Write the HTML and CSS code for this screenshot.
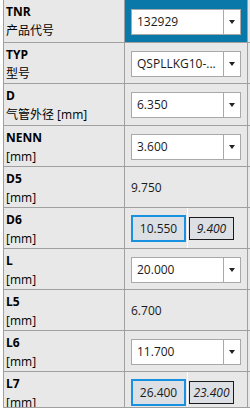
FILE: index.html
```html
<!DOCTYPE html>
<html lang="zh">
<head>
    <meta charset="UTF-8">
    <meta name="viewport" content="width=device-width, initial-scale=1.0">
    <title>Properties</title>
    <link rel="stylesheet" href="styles.css">
</head>
<body>
    <div class="grid">
        <div class="row row-first">
            <div class="label"><b>TNR</b><span>产品代号</span></div>
            <div class="value selected">
                <div class="combo"><span class="combo-text">132929</span><span class="combo-btn"></span></div>
            </div>
            <div class="filler"></div>
        </div>
        <div class="row">
            <div class="label"><b>TYP</b><span>型号</span></div>
            <div class="value">
                <div class="combo"><span class="combo-text">QSPLLKG10-...</span><span class="combo-btn"></span></div>
            </div>
            <div class="filler"></div>
        </div>
        <div class="row row-tall">
            <div class="label"><b>D</b><span>气管外径 [mm]</span></div>
            <div class="value">
                <div class="combo"><span class="combo-text">6.350</span><span class="combo-btn"></span></div>
            </div>
            <div class="filler"></div>
        </div>
        <div class="row">
            <div class="label"><b>NENN</b><span>[mm]</span></div>
            <div class="value">
                <div class="combo"><span class="combo-text">3.600</span><span class="combo-btn"></span></div>
            </div>
            <div class="filler"></div>
        </div>
        <div class="row">
            <div class="label"><b>D5</b><span>[mm]</span></div>
            <div class="value"><span class="plain">9.750</span></div>
            <div class="filler"></div>
        </div>
        <div class="row">
            <div class="label"><b>D6</b><span>[mm]</span></div>
            <div class="value">
                <div class="cell-edit">10.550</div>
                <div class="split"></div>
                <div class="cell-ref">9.400</div>
            </div>
            <div class="filler"></div>
        </div>
        <div class="row">
            <div class="label"><b>L</b><span>[mm]</span></div>
            <div class="value">
                <div class="combo"><span class="combo-text">20.000</span><span class="combo-btn"></span></div>
            </div>
            <div class="filler"></div>
        </div>
        <div class="row">
            <div class="label"><b>L5</b><span>[mm]</span></div>
            <div class="value"><span class="plain">6.700</span></div>
            <div class="filler"></div>
        </div>
        <div class="row">
            <div class="label"><b>L6</b><span>[mm]</span></div>
            <div class="value">
                <div class="combo"><span class="combo-text">11.700</span><span class="combo-btn"></span></div>
            </div>
            <div class="filler"></div>
        </div>
        <div class="row">
            <div class="label"><b>L7</b><span>[mm]</span></div>
            <div class="value">
                <div class="cell-edit">26.400</div>
                <div class="split"></div>
                <div class="cell-ref">23.400</div>
            </div>
            <div class="filler"></div>
        </div>
    </div>
</body>
</html>
```

FILE: styles.css
```css
:root {
    --grid-line: #a0a0a0;
    --cell-bg: #e8e8e8;
    --select-bg: #0a78a8;
    --focus: #1791e0;
    --box-bg: #dcdfe3;
    --text-color: #1a1a1a;
}

* {
    box-sizing: border-box;
}

body {
    margin: 0;
    background: #fff;
    font-family: "Open Sans", "Noto Sans CJK SC", sans-serif;
    font-size: 12px;
    color: var(--text-color);
}

.grid {
    box-sizing: content-box;
    margin-left: 3px;
    height: 407px;
    overflow: hidden;
    border-left: 1px solid var(--grid-line);
    border-bottom: 1px solid var(--grid-line);
    background: var(--cell-bg);
}

.row {
    display: grid;
    grid-template-columns: 121px 123px 1fr;
    height: 41px;
    border-bottom: 1px solid var(--grid-line);
}

.row-first {
    height: 43px;
}

.row-tall {
    height: 42px;
}

.label {
    display: flex;
    flex-direction: column;
    padding: 2px 2px 0;
    line-height: 19px;
    color: #000;
    border-right: 1px solid var(--grid-line);
    white-space: nowrap;
}

.label b {
    font-weight: 700;
}

.value {
    display: flex;
    align-items: center;
    padding-left: 6px;
    border-right: 1px solid var(--grid-line);
}

.selected {
    background: var(--select-bg);
}

.combo {
    display: flex;
    width: 110px;
    height: 26px;
    margin-top: 1px;
    background: #fff;
    border: 1px solid #a9a9a9;
}

.combo-text {
    flex: 1;
    padding: 0 5px;
    line-height: 24px;
    overflow: hidden;
    white-space: nowrap;
}

.combo-btn {
    display: flex;
    align-items: center;
    justify-content: center;
    width: 17px;
    border-left: 1px solid #a9a9a9;
}

.combo-btn::after {
    content: "";
    border-left: 3.5px solid transparent;
    border-right: 3.5px solid transparent;
    border-top: 4px solid #222;
}

.plain {
    line-height: 19px;
}

.cell-edit {
    width: 55px;
    height: 27px;
    line-height: 23px;
    text-align: center;
    background: var(--box-bg);
    border: 2px solid var(--focus);
}

.split {
    align-self: stretch;
    width: 1px;
    margin-left: 1px;
    background: #fff;
}

.cell-ref {
    width: 45px;
    height: 23px;
    margin-left: 1px;
    line-height: 21px;
    text-align: center;
    font-style: italic;
    background: var(--box-bg);
    border: 1px solid #1a1a1a;
}
```
